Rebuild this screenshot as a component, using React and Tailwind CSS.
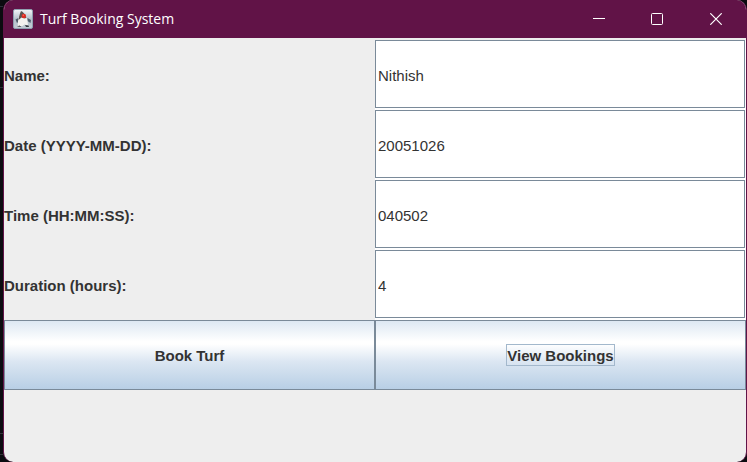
import React from "react";

const fields = [
  { id: "name", label: "Name:", value: "Nithish" },
  { id: "date", label: "Date (YYYY-MM-DD):", value: "20051026" },
  { id: "time", label: "Time (HH:MM:SS):", value: "040502" },
  { id: "duration", label: "Duration (hours):", value: "4" },
];

const buttonClass =
  "flex h-[70px] items-center justify-center border border-[#7a8a99] bg-[linear-gradient(to_bottom,#dde8f3_0%,#ffffff_30%,#ffffff_34%,#dbe6f2_60%,#b8cfe5_100%)] text-[15px] leading-[18px] font-bold text-[#333333]";

function DukeIcon() {
  return (
    <svg width="20" height="20" viewBox="0 0 20 20" aria-hidden="true">
      <defs>
        <linearGradient id="tile" x1="0" y1="0" x2="0" y2="1">
          <stop offset="0" stopColor="#f4f6f8" />
          <stop offset="0.5" stopColor="#b4c1cc" />
          <stop offset="1" stopColor="#c3ccd4" />
        </linearGradient>
      </defs>
      <rect x="0.5" y="0.5" width="19" height="19" rx="1.5" fill="url(#tile)" stroke="#8fa0b0" />
      <path d="M2.500 10.500l3-1.500 1 3-2.500 2ZM14.500 9l3.500 2-0.500 3-3-2Z" fill="#51606d" />
      <path d="M8 2C11 3 14 8 14.500 12l0.500 4.500-3.500-1-2 1.500-4.500 0.500C4.500 12 6 5 8 2Z" fill="#f3f2ef" />
      <path d="M8 2c2 0.500 4 3 5.500 6.500L12 9.500 8.500 8.500 5.500 11C6 7 7 4 8 2Z" fill="#5b5654" />
      <path d="M4 17.500l2.500-1 2 1.500ZM12 16l3.500 0.500 0.500 1.500-3 0Z" fill="#343a40" />
      <circle cx="10.800" cy="7" r="2.200" fill="#df2b22" />
      <circle cx="10.300" cy="6.300" r="0.700" fill="#f4745f" />
    </svg>
  );
}

function TitleBar() {
  return (
    <header className="flex h-[38px] items-center bg-[#611347] pl-[9px] text-white">
      <DukeIcon />
      <h1 className="ml-[7px] flex-1 font-['Open_Sans','Noto_Sans',sans-serif] text-[14px] leading-5">
        Turf Booking System
      </h1>
      <button type="button" aria-label="Minimize" className="flex h-full w-[58px] items-center justify-center">
        <svg width="12" height="12" viewBox="0 0 12 12" fill="none" stroke="currentColor">
          <path d="M0 5.500h12" />
        </svg>
      </button>
      <button type="button" aria-label="Maximize" className="flex h-full w-[58px] items-center justify-center">
        <svg width="12" height="12" viewBox="0 0 12 12" fill="none" stroke="currentColor">
          <rect x="0.500" y="0.500" width="11" height="11" rx="1" />
        </svg>
      </button>
      <button type="button" aria-label="Close" className="flex h-full w-[60px] items-center justify-center">
        <svg width="12" height="12" viewBox="0 0 12 12" fill="none" stroke="currentColor" strokeWidth="1.200">
          <path d="M0.300 0.300l11.400 11.400M11.700 0.300l-11.400 11.400" />
        </svg>
      </button>
    </header>
  );
}

export default function App() {
  return (
    <div className="flex min-h-screen bg-[#0b0b10]">
      <div className="flex w-[3px] flex-col">
        <div className="h-[7px] border-b border-[#2b2e38]" />
        <div className="h-[81px] border-b border-[#2b2e38]" />
        <div className="flex-1" />
        <div className="h-[22px] border-y border-[#33333a]" />
        <div className="h-[7px]" />
      </div>
      <main className="flex flex-1 flex-col overflow-hidden rounded-[10px] border-x border-[#611347] bg-[#eeeeee] font-['Liberation_Sans',Arial,sans-serif]">
        <TitleBar />
        <form className="grid grid-cols-2 pt-0.5" onSubmit={(e) => e.preventDefault()}>
          {fields.map((f) => (
            <React.Fragment key={f.id}>
              <label htmlFor={f.id} className="flex h-[70px] items-center pt-0.5 text-[15px] leading-5 font-bold text-[#333333]">
                {f.label}
              </label>
              <div className="h-[70px] bg-white pr-px pb-0.5">
                <input
                  id={f.id}
                  type="text"
                  defaultValue={f.value}
                  className="h-full w-full border border-[#7a8a99] bg-white pt-0.5 pl-0.5 text-[15px] leading-5 text-[#333333] outline-none"
                />
              </div>
            </React.Fragment>
          ))}
          <button type="button" className={buttonClass}>
            <span className="border border-transparent pt-0.5">Book Turf</span>
          </button>
          <button type="button" className={buttonClass}>
            <span className="border border-[#a3b8cc] pt-0.5">View Bookings</span>
          </button>
        </form>
      </main>
    </div>
  );
}
